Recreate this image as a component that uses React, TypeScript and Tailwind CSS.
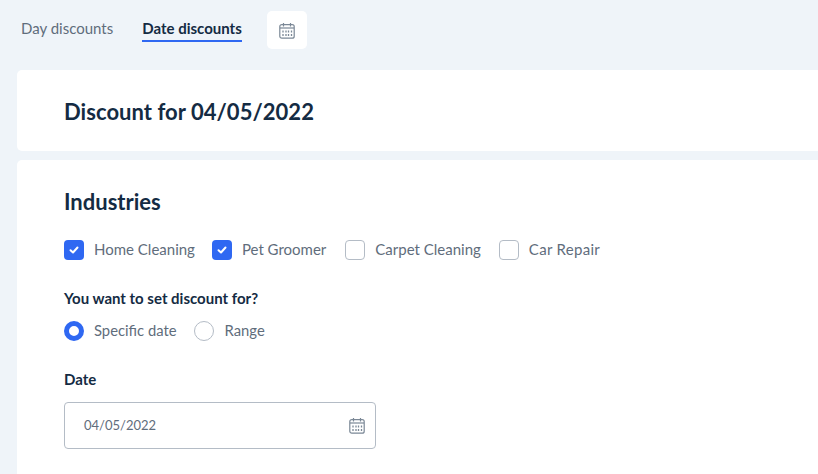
const CalendarIcon = () => (
  <svg width="16" height="17" viewBox="0 0 16 17" fill="none" stroke="#7b8896" strokeWidth="1.2">
    <rect x="0.8" y="2.6" width="14.4" height="13.6" rx="2" />
    <path d="M1 6h14" />
    <path d="M4.5 1v3.4M11.5 1v3.4" />
    <path d="M4 8.5v2M4 12v2M7 8.5v2M7 12v2M9.5 8.5v2M9.5 12v2M12.5 8.5v2M12.5 12v2" strokeWidth="1.3" />
  </svg>
)

const Checkbox = ({ label, checked, className, textClass }: { label: string; checked?: boolean; className?: string; textClass?: string }) => (
  <label className={`flex items-center gap-[10px] ${className ?? ""}`}>
    {checked ? (
      <span className="flex h-5 w-5 items-center justify-center rounded-[4px] bg-[#2f68f2]">
        <svg width="12" height="12" viewBox="0 0 12 12" fill="none" stroke="#fff" strokeWidth="2" strokeLinecap="round" strokeLinejoin="round">
          <path d="M2.5 6.2 5 8.5l4.5-5" />
        </svg>
      </span>
    ) : (
      <span className="h-5 w-5 rounded-[4px] border border-[#b4bcc6] bg-white" />
    )}
    <span className={`pb-[2px] text-[15px] leading-5 text-[#5f6d7c] ${textClass ?? ""}`}>{label}</span>
  </label>
)

const Radio = ({ label, checked, className }: { label: string; checked?: boolean; className?: string }) => (
  <label className={`flex items-center gap-[10px] ${className ?? ""}`}>
    {checked ? (
      <span className="h-5 w-5 rounded-full border-[5px] border-[#2f68f2] bg-white" />
    ) : (
      <span className="h-5 w-5 rounded-full border border-[#b4bcc6] bg-white" />
    )}
    <span className="pb-[2px] text-[14.8px] leading-5 text-[#5f6d7c]">{label}</span>
  </label>
)

export default function App() {
  return (
    <div className="h-[474px] w-[818px] overflow-hidden bg-[#eff4f9] font-['Lato',sans-serif]">
      {/* tabs */}
      <div className="flex h-[70px] items-start pl-[21px] pt-[11px]">
        <div className="pt-[7px] text-[15px] leading-5 text-[#5f6d7c]">Day discounts</div>
        <div className="ml-[29px] h-[31px] border-b-2 border-[#2f68f2] pt-[7px] text-[15px] font-bold leading-5 text-[#142b43]">
          Date discounts
        </div>
        <button className="ml-[25px] flex h-[38px] w-10 items-center justify-center rounded-[5px] bg-white">
          <CalendarIcon />
        </button>
      </div>

      <div className="ml-[17px] flex flex-col gap-[9px]">
        <div className="flex h-[81px] items-center rounded-l-[5px] bg-white pl-[47px] pt-[2px]">
          <h1 className="text-[22px] font-bold leading-7 tracking-[0.002em] text-[#142b43]">Discount for 04/05/2022</h1>
        </div>

        <div className="h-[400px] rounded-l-[5px] bg-white pl-[47px] pt-[28px]">
          <h2 className="text-[22px] font-bold leading-7 text-[#142b43]">Industries</h2>

          <div className="mt-[23px] flex h-[22px] items-center gap-[18px]">
            <Checkbox label="Home Cleaning" checked />
            <Checkbox label="Pet Groomer" checked className="-ml-px" />
            <Checkbox label="Carpet Cleaning" className="ml-px" />
            <Checkbox label="Car Repair" textClass="tracking-[0.02em]" />
          </div>

          <div className="mt-[27px] text-[15px] font-bold leading-5 text-[#142b43]">You want to set discount for?</div>

          <div className="mt-[12px] flex h-[22px] items-center gap-[17px]">
            <Radio label="Specific date" checked />
            <Radio label="Range" className="[&>span:last-child]:ml-px" />
          </div>

          <div className="mt-[27px] text-[15px] font-bold leading-5 text-[#142b43]">Date</div>

          <div className="mt-[13px] flex h-[47px] w-[312px] items-center justify-between rounded-[4px] border border-[#b4bcc6] pl-[19px] pr-[10px]">
            <span className="text-[13px] text-[#5f6d7c]">04/05/2022</span>
            <CalendarIcon />
          </div>
        </div>
      </div>
    </div>
  )
}
